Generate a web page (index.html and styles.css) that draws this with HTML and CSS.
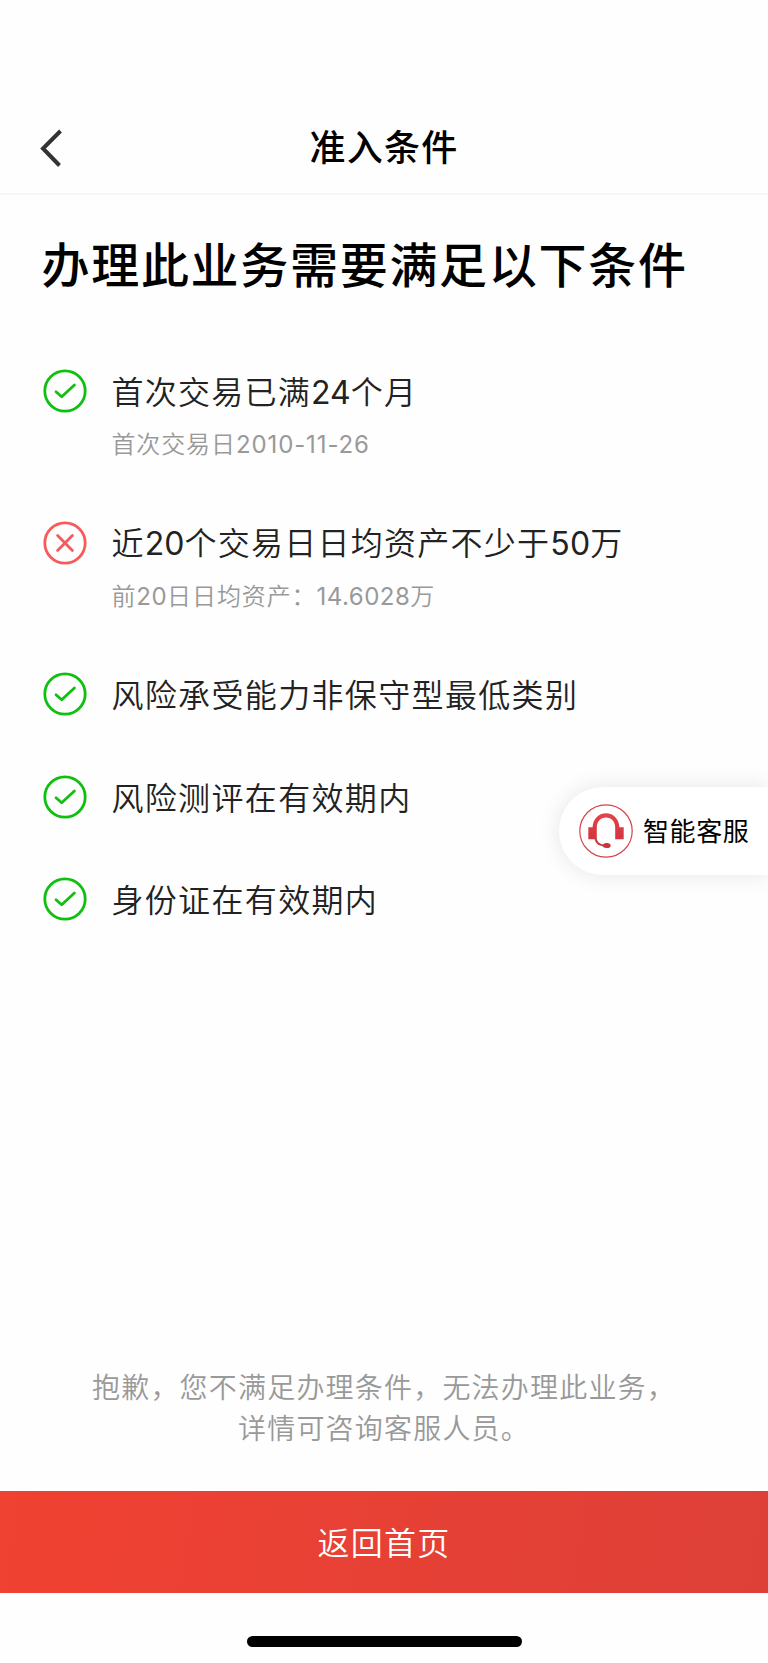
FILE: index.html
```html
<!DOCTYPE html>
<html lang="zh-CN">
<head>
<meta charset="utf-8">
<title>准入条件</title>
<link rel="stylesheet" href="styles.css">
</head>
<body>
<svg class="defs" aria-hidden="true">
  <symbol id="ok" viewBox="0 0 44 44"><circle cx="22" cy="22" r="20.2"/><path d="M13 22.800l5.700 5L31.400 16"/></symbol>
  <symbol id="no" viewBox="0 0 44 44"><circle cx="22" cy="22" r="20.2"/><path d="M14.600 14.600l14.800 14.800M29.400 14.600L14.600 29.400"/></symbol>
</svg>
<div class="page">
  <header class="nav">
    <svg class="back" viewBox="0 0 24 40"><path d="M21.500 3L4 20.500l16.500 17"/></svg>
    <h1 class="nav-title">准入条件</h1>
  </header>
  <main class="main">
    <h2 class="heading">办理此业务需要满足以下条件</h2>
    <ul class="list">
      <li class="item">
        <svg class="icon ok"><use href="#ok"/></svg>
        <p class="label">首次交易已满<span class="num">24</span>个月</p>
        <p class="sub">首次交易日<span class="num date">2010-11-26</span></p>
      </li>
      <li class="item">
        <svg class="icon no"><use href="#no"/></svg>
        <p class="label">近<span class="num">20</span>个交易日日均资产不少于<span class="num">50</span>万</p>
        <p class="sub">前<span class="num">20</span>日日均资产：<span class="num">14.6028</span>万</p>
      </li>
      <li class="item">
        <svg class="icon ok"><use href="#ok"/></svg>
        <p class="label plain">风险承受能力非保守型最低类别</p>
      </li>
      <li class="item">
        <svg class="icon ok"><use href="#ok"/></svg>
        <p class="label plain">风险测评在有效期内</p>
      </li>
      <li class="item">
        <svg class="icon ok"><use href="#ok"/></svg>
        <p class="label plain">身份证在有效期内</p>
      </li>
    </ul>
    <p class="note">抱歉，您不满足办理条件，无法办理此业务，<br>详情可咨询客服人员。</p>
  </main>
  <button class="home">返回首页</button>
  <footer class="indicator"><span class="bar"></span></footer>
  <a class="service">
    <svg class="service-icon" viewBox="0 0 54 54">
      <defs><linearGradient id="red" x1="0" y1="0" x2="0" y2="1"><stop offset="0" stop-color="#e8414a"/><stop offset="1" stop-color="#c9323c"/></linearGradient></defs>
      <circle cx="27" cy="27" r="26.2" fill="none" stroke="#d8434b" stroke-width="1.2"/>
      <path fill="url(#red)" d="M9.300 23.200h4.300C14 15 19.500 9.300 27 9.300S40 15 40.400 23.200h4.300v12h-8.500V23.500c0-6-3.800-10-9.200-10s-9.200 4-9.200 10v11.700c.5 2.600 2.800 4.600 6.200 5.200.8-1 2-1.500 3.700-1.500 2.600 0 4 .9 4 2.600s-1.400 2.600-4 2.600c-2.200 0-3.800-.7-4.300-2-4.200-.7-7.200-3.200-7.700-6.900H9.300z"/>
    </svg>
    <span class="service-text">智能客服</span>
  </a>
</div>
</body>
</html>
```
FILE: styles.css
```css
* { box-sizing: border-box; margin: 0; padding: 0; }
body { background: #fff; font-family: "Noto Sans CJK SC", sans-serif; }
.defs { position: absolute; width: 0; height: 0; }
.page { position: relative; display: flex; flex-direction: column; width: 768px; height: 1663px; background: #fefefe; overflow: hidden; }
.nav { display: grid; grid-template-columns: 90px 1fr 90px; align-items: center; height: 195px; padding-top: 102px; border-bottom: 2px solid #f7f7f7; }
.back { width: 24px; height: 40px; margin-left: 39px; margin-top: 1px; fill: none; stroke: #333; stroke-width: 4; }
.nav-title { grid-column: 2; margin-top: -5px; text-align: center; font-size: 36px; line-height: 54px; font-weight: 500; letter-spacing: 1.3px; color: #000; }
.main { flex: 1; display: flex; flex-direction: column; }
.heading { margin: 32px 0 0 41.5px; font-size: 48px; line-height: 70px; font-weight: 500; letter-spacing: 1.7px; color: #000; white-space: nowrap; }
.list { margin-top: 43px; list-style: none; }
.item { display: grid; grid-template-columns: 44px 1fr; column-gap: 24px; grid-template-rows: 102.4px; padding-left: 43.4px; align-items: center; }
.icon { width: 44px; height: 44px; fill: none; stroke-width: 2.8; stroke-linecap: round; stroke-linejoin: round; }
.ok { stroke: #10c010; }
.no { stroke: #f75a5a; }
.label { font-size: 32px; line-height: 48px; letter-spacing: 1.25px; font-weight: 350; color: #222; white-space: nowrap; }
.plain { padding-bottom: 2px; letter-spacing: 1.35px; }
.sub { grid-column: 2; height: 65.2px; margin-top: -16px; font-size: 24px; line-height: 34px; letter-spacing: .9px; font-weight: 350; color: #999; white-space: nowrap; }
.num { font-family: Inter, sans-serif; font-weight: 400; letter-spacing: .1px; }
.sub .num { letter-spacing: .5px; }
.sub .date { letter-spacing: .9px; }
.note { margin-top: auto; margin-bottom: 43px; text-align: center; font-size: 28px; line-height: 41px; letter-spacing: 1.2px; font-weight: 350; color: #999; }
.home { height: 102px; padding-bottom: 3px; border: 0; background: linear-gradient(100deg, #f04132, #de4038); color: #fff; font-family: inherit; font-size: 32px; font-weight: 350; letter-spacing: 1.3px; }
.indicator { display: flex; justify-content: center; height: 70px; padding-top: 43px; }
.bar { width: 275px; height: 11px; border-radius: 6px; background: #000; }
.service { position: absolute; right: 0; top: 787px; display: flex; align-items: center; gap: 10px; width: 209px; height: 88px; padding-left: 20px; border-radius: 44px 0 0 44px; background: #fff; box-shadow: 0 0 22px rgba(0, 0, 0, .1); font-size: 26px; letter-spacing: .6px; color: #000; white-space: nowrap; }
.service-icon { width: 54px; height: 54px; }
.service-text { padding-bottom: 3px; }
```
